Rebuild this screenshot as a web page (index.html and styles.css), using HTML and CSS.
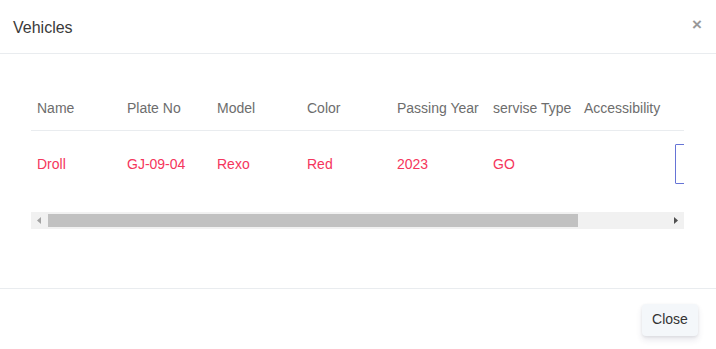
FILE: index.html
```html
<!DOCTYPE html>
<html lang="en">
<head>
    <meta charset="UTF-8">
    <meta name="viewport" content="width=device-width, initial-scale=1.0">
    <title>Vehicles</title>
    <link rel="stylesheet" href="styles.css">
</head>
<body>
    <div class="modal">
        <div class="modal-header">
            <h5 class="modal-title">Vehicles</h5>
            <button class="close-x" type="button">&times;</button>
        </div>

        <div class="modal-body">
            <div class="table-wrap">
                <table class="vehicle-table">
                    <thead>
                        <tr>
                            <th class="c-name">Name</th>
                            <th class="c-plate">Plate No</th>
                            <th class="c-model">Model</th>
                            <th class="c-color">Color</th>
                            <th class="c-year">Passing Year</th>
                            <th class="c-type">servise Type</th>
                            <th class="c-access">Accessibility</th>
                            <th class="c-action"></th>
                        </tr>
                    </thead>
                    <tbody>
                        <tr>
                            <td>Droll</td>
                            <td>GJ-09-04</td>
                            <td>Rexo</td>
                            <td>Red</td>
                            <td>2023</td>
                            <td>GO</td>
                            <td></td>
                            <td><button class="btn-outline" type="button"></button></td>
                        </tr>
                    </tbody>
                </table>
            </div>

            <!-- horizontal scrollbar of the table -->
            <div class="hscroll">
                <div class="hscroll-btn">
                    <svg width="17" height="17" viewBox="0 0 17 17"><path d="M6 8.5L10 5v7z" fill="#a3a3a3"/></svg>
                </div>
                <div class="hscroll-track">
                    <div class="hscroll-thumb"></div>
                </div>
                <div class="hscroll-btn">
                    <svg width="17" height="17" viewBox="0 0 17 17"><path d="M11 8.5L7 5v7z" fill="#505050"/></svg>
                </div>
            </div>
        </div>

        <div class="modal-footer">
            <button class="btn-secondary" type="button">Close</button>
        </div>
    </div>
</body>
</html>
```

FILE: styles.css
```css
* {
    margin: 0;
    padding: 0;
    box-sizing: border-box;
}

body {
    font-family: 'Liberation Sans', Arial, sans-serif;
    background: white;
    color: #333;
}

.modal {
    width: 716px;
    height: 349px;
    background: white;
}

.modal-header {
    display: flex;
    justify-content: space-between;
    align-items: flex-start;
    height: 54px;
    padding: 19px 14px 0 13px;
    border-bottom: 1px solid #e9ecef;
}

.modal-title {
    font-size: 16px;
    font-weight: normal;
    color: #3a3a3a;
    line-height: 18px;
}

.close-x {
    background: none;
    border: none;
    font-family: inherit;
    font-size: 17px;
    font-weight: bold;
    color: #999;
    line-height: 10px;
    margin-top: 1px;
    cursor: pointer;
}

.modal-body {
    padding: 30px 32px 0 31px;
    height: 235px;
    border-bottom: 1px solid #e9ecef;
}

.table-wrap {
    overflow: hidden;
}

.vehicle-table {
    border-collapse: collapse;
    table-layout: fixed;
    width: 763px;
    font-size: 14px;
}

.vehicle-table th {
    text-align: left;
    font-weight: normal;
    color: #6d6d6d;
    padding: 16px 6px 14px;
    line-height: 16px;
    white-space: nowrap;
    border-bottom: 1px solid #e9ecef;
}

.vehicle-table td {
    color: #f5365c;
    padding: 13px 6px 15px;
    height: 68px;
    line-height: 16px;
    white-space: nowrap;
}

.c-name, .c-plate, .c-model, .c-color {
    width: 90px;
}

.c-year {
    width: 96px;
}

.c-type, .c-access {
    width: 91px;
}

.c-action {
    width: 125px;
}

.btn-outline {
    display: block;
    width: 90px;
    height: 40px;
    border: 1.5px solid #6674d6;
    border-radius: 1px;
    background: white;
    cursor: pointer;
}

.hscroll {
    display: flex;
    height: 17px;
    margin-top: 13px;
    background: #f1f1f1;
}

.hscroll-btn {
    width: 17px;
    height: 17px;
}

.hscroll-btn svg {
    display: block;
}

.hscroll-track {
    flex: 1;
    padding: 2px 0;
}

.hscroll-thumb {
    width: 530px;
    height: 13px;
    background: #c1c1c1;
}

.modal-footer {
    display: flex;
    justify-content: flex-end;
    padding: 15px 18px;
}

.btn-secondary {
    width: 56px;
    height: 32px;
    padding-bottom: 2px;
    background: #f4f7fa;
    border: none;
    border-radius: 4px;
    box-shadow: 0 4px 6px rgba(50,50,93,0.11), 0 1px 3px rgba(0,0,0,0.08);
    color: #333;
    font-family: inherit;
    font-size: 14px;
    cursor: pointer;
}
```
